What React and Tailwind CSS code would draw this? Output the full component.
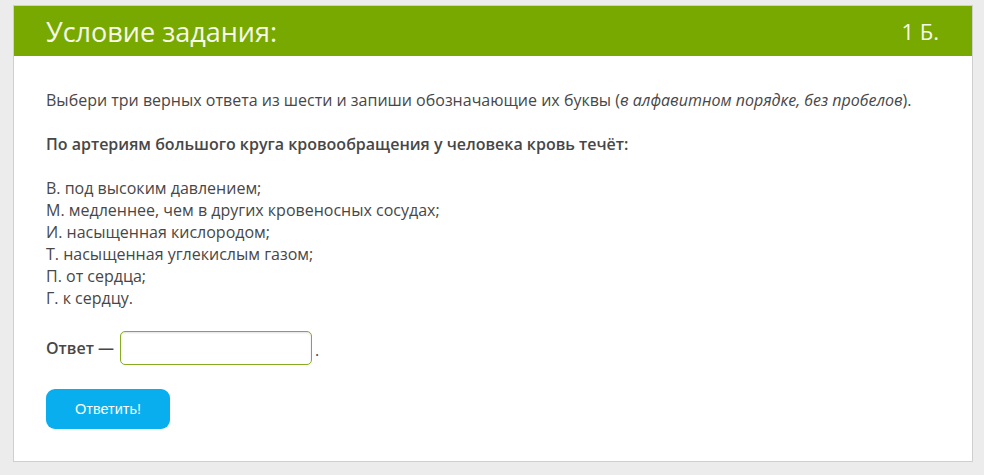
import React from 'react';

const options = [
  'В. под высоким давлением;',
  'М. медленнее, чем в других кровеносных сосудах;',
  'И. насыщенная кислородом;',
  'Т. насыщенная углекислым газом;',
  'П. от сердца;',
  'Г. к сердцу.',
];

export default function App() {
  return (
    <div className="min-h-[475px] bg-[#ececec] pt-[5px] pl-[13px] font-['Open_Sans',sans-serif]">
      <div className="w-[960px] h-[457px] bg-white border border-[#cfcfcf]">
        {/* Header */}
        <div className="h-[50px] bg-[#77a900] flex items-center justify-between pl-[32px] pr-[33px] text-[#f7faea]">
          <h2 className="text-[27px] leading-none">Условие задания:</h2>
          <span className="text-[22px] leading-none">1 Б.</span>
        </div>

        {/* Body */}
        <div className="pt-[33px] pl-[32px] text-[16px] leading-[22px] text-[#474747]">
          <p>
            Выбери три верных ответа из шести и запиши обозначающие их буквы (
            <i>в алфавитном порядке, без пробелов</i>).
          </p>
          <p className="mt-[22px] font-semibold">
            По артериям большого круга кровообращения у человека кровь течёт:
          </p>
          <div className="mt-[22px]">
            {options.map((o) => (
              <div key={o}>{o}</div>
            ))}
          </div>

          <div className="mt-[22px] flex items-center">
            <span className="font-semibold">Ответ —</span>
            <input
              type="text"
              className="ml-[6px] w-[192px] h-[34px] rounded-[5px] border border-[#86ad1f] bg-white shadow-[inset_0_1px_2px_rgba(0,0,0,0.12)] outline-none"
            />
            <span className="ml-[3px] mt-[4px]">.</span>
          </div>

          <button className="mt-[24px] w-[124px] h-[40px] rounded-[9px] bg-[#08aeee] text-white text-[14.5px] font-['Liberation_Sans',Arial,sans-serif]">
            Ответить!
          </button>
        </div>
      </div>
    </div>
  );
}
